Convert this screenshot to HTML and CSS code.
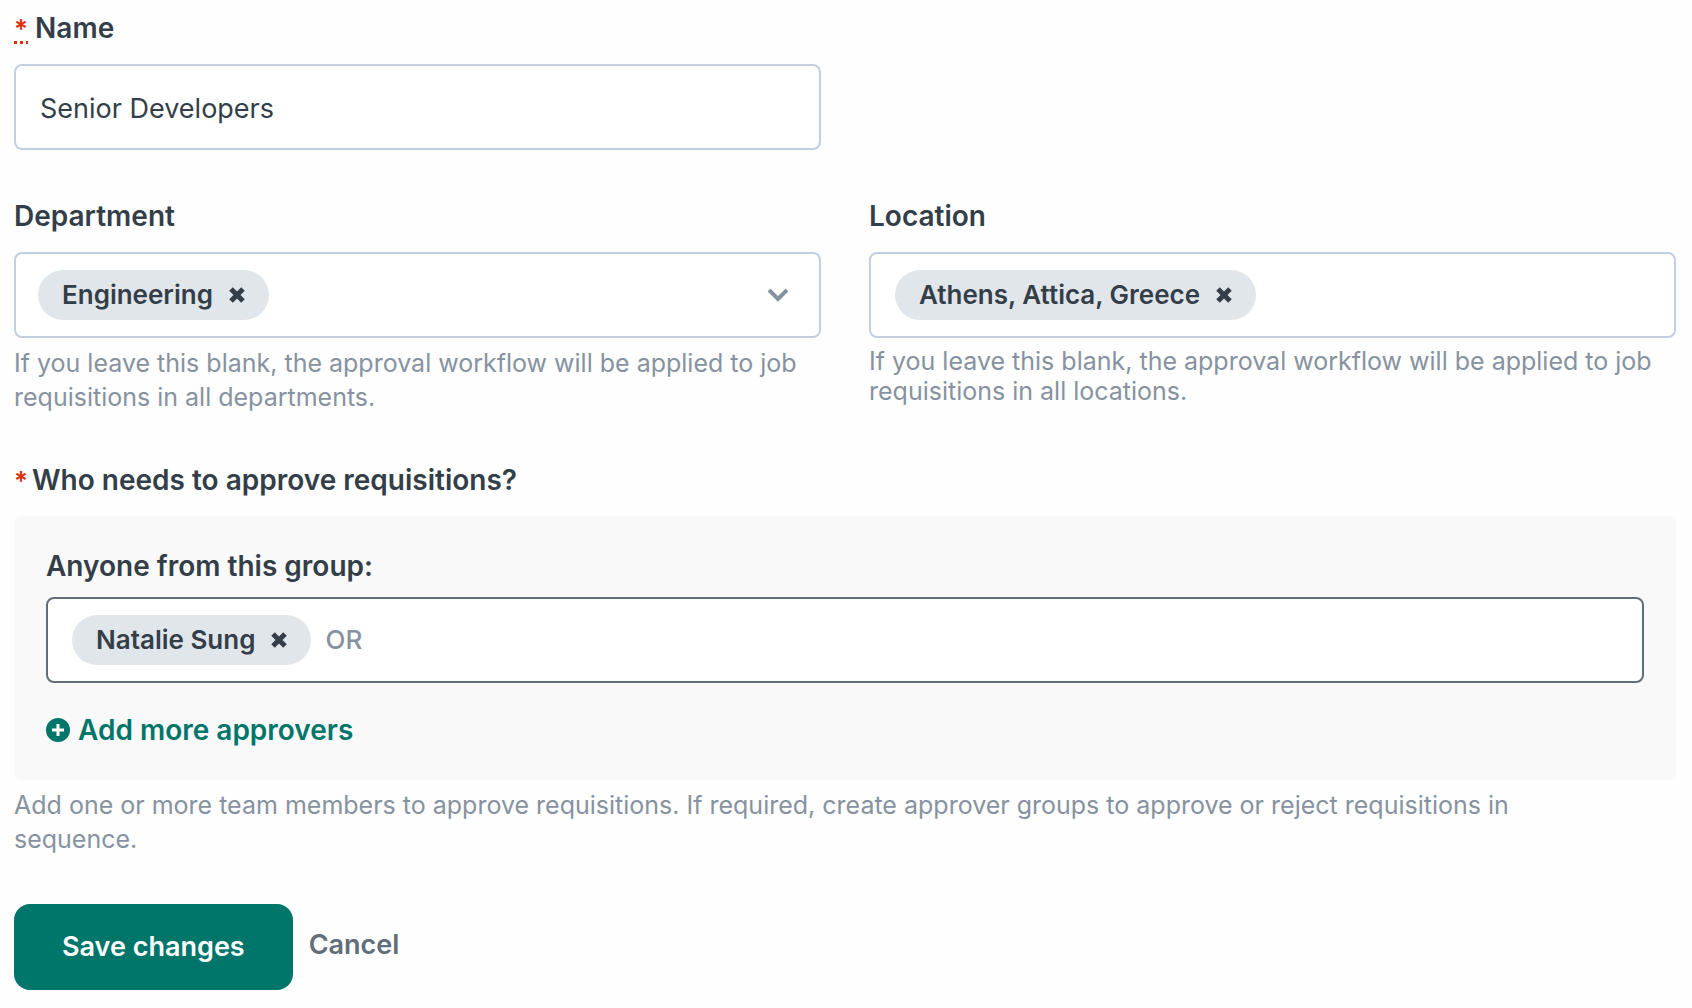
FILE: index.html
```html
<!DOCTYPE html>
<html lang="en">
<head>
    <meta charset="UTF-8">
    <meta name="viewport" content="width=device-width, initial-scale=1">
    <title>Approval workflow</title>
    <link rel="stylesheet" href="styles.css">
</head>
<body>
    <form class="workflow-form">
        <div class="row">
            <div class="field">
                <label class="label" for="name"><abbr class="required" title="required">*</abbr> Name</label>
                <input class="control text-input" type="text" id="name" value="Senior Developers" required>
            </div>
        </div>

        <div class="row">
            <div class="field">
                <label class="label" for="department">Department</label>
                <div class="control tags tags-select">
                    <span class="tag">
                        Engineering
                        <button class="tag-remove" type="button" aria-label="Remove Engineering">
                            <svg viewBox="0 0 16 16"><path d="M2 2l12 12M14 2l-12 12"/></svg>
                        </button>
                    </span>
                    <input class="tag-input" type="text" id="department">
                    <button class="toggle" type="button" aria-label="Show departments">
                        <svg viewBox="0 0 22 14"><path d="M2 2l9 9 9-9"/></svg>
                    </button>
                </div>
                <p class="help">If you leave this blank, the approval workflow will be applied to job requisitions in all departments.</p>
            </div>
            <div class="field">
                <label class="label" for="location">Location</label>
                <div class="control tags">
                    <span class="tag">
                        Athens, Attica, Greece
                        <button class="tag-remove" type="button" aria-label="Remove Athens, Attica, Greece">
                            <svg viewBox="0 0 16 16"><path d="M2 2l12 12M14 2l-12 12"/></svg>
                        </button>
                    </span>
                    <input class="tag-input" type="text" id="location">
                </div>
                <p class="help help-compact">If you leave this blank, the approval workflow will be applied to job requisitions in all locations.</p>
            </div>
        </div>

        <div class="approvers">
            <h2 class="label"><span class="required-mark">*</span>Who needs to approve requisitions?</h2>
            <div class="group">
                <label class="label group-label" for="approver">Anyone from this group:</label>
                <div class="control tags tags-active">
                    <span class="tag">
                        Natalie Sung
                        <button class="tag-remove" type="button" aria-label="Remove Natalie Sung">
                            <svg viewBox="0 0 16 16"><path d="M2 2l12 12M14 2l-12 12"/></svg>
                        </button>
                    </span>
                    <span class="or">OR</span>
                    <input class="tag-input" type="text" id="approver">
                </div>
                <button class="add-more" type="button">
                    <svg viewBox="0 0 24 24"><circle cx="12" cy="12" r="12"/><path d="M12 6v12M6 12h12"/></svg>
                    Add more approvers
                </button>
            </div>
            <p class="help help-wide">Add one or more team members to approve requisitions. If required, create approver groups to approve or reject requisitions in sequence.</p>
        </div>

        <div class="actions">
            <button class="save" type="submit">Save changes</button>
            <button class="cancel" type="button">Cancel</button>
        </div>
    </form>
</body>
</html>
```

FILE: styles.css
```css
* {
    box-sizing: border-box;
}
body {
    margin: 0;
    padding: 10px 16px 16px 14px;
    background-color: #fefefe;
    color: #333e49;
    font-family: Inter, "Liberation Sans", sans-serif;
    font-size: 27px;
    line-height: 36px;
}
button, input {
    font: inherit;
    color: inherit;
}
button {
    padding: 0;
    border: none;
    background: none;
    cursor: pointer;
}
svg {
    display: block;
    fill: none;
    stroke: currentColor;
}
.workflow-form {
    display: flex;
    flex-direction: column;
    gap: 48px;
}
.row {
    display: grid;
    grid-template-columns: repeat(2, minmax(0, 1fr));
    gap: 48px;
}
.label {
    display: block;
    margin: 0 0 18px;
    font-size: 28px;
    font-weight: 600;
}
.required, .required-mark {
    color: #d9300f;
    font-size: 26px;
    line-height: 1;
}
.required {
    text-decoration: underline dotted 3px;
    text-underline-offset: 3px;
}
.required-mark {
    margin-right: 4px;
}

/* inputs */
.control {
    width: 100%;
    height: 86px;
    border: 2px solid #c3cfe0;
    border-radius: 8px;
    background-color: #fff;
}
.text-input {
    padding: 2px 24px 0;
}
.tags {
    display: flex;
    align-items: center;
    padding: 0 24px;
}
.tags-select {
    padding: 0 22px;
}
.tags-active {
    border-color: #616d79;
}
.tag {
    display: flex;
    align-items: center;
    gap: 16px;
    height: 50px;
    padding: 0 24px;
    border-radius: 25px;
    background-color: #e1e6ea;
    font-size: 26px;
    font-weight: 600;
    white-space: nowrap;
}
.tag-remove svg {
    width: 16px;
    height: 16px;
    stroke-width: 5;
}
.tag-input {
    flex: 1;
    min-width: 0;
    padding: 0 8px;
    border: none;
    outline: none;
    background: none;
}
.toggle {
    padding: 8px;
    color: #8792a0;
}
.toggle svg {
    width: 22px;
    height: 14px;
    stroke-width: 4;
}
.or {
    margin-left: 14px;
    color: #8792a0;
    font-size: 26px;
    font-weight: 500;
}
.help {
    margin: 8px 0 0;
    color: #8792a0;
    font-size: 25px;
    line-height: 34px;
}
.help-compact {
    line-height: 30px;
}
.help-wide {
    padding-right: 64px;
}

/* approver group */
.group {
    padding: 32px;
    border-radius: 8px;
    background-color: #f9f9f9;
}
.group-label {
    margin-bottom: 13px;
}
.add-more {
    display: flex;
    align-items: center;
    gap: 8px;
    margin-top: 29px;
    color: #00756a;
    font-size: 28px;
    font-weight: 600;
}
.add-more svg {
    width: 24px;
    height: 24px;
    stroke-width: 3;
}
.add-more circle {
    fill: currentColor;
    stroke: none;
}
.add-more path {
    stroke: #fff;
}

/* buttons */
.actions {
    display: flex;
    align-items: center;
    gap: 16px;
}
.save {
    height: 86px;
    padding: 0 48px;
    border-radius: 16px;
    background-color: #00756a;
    color: #fff;
    font-weight: 600;
}
.cancel {
    padding-bottom: 4px;
    color: #616d79;
    font-weight: 600;
}
```
